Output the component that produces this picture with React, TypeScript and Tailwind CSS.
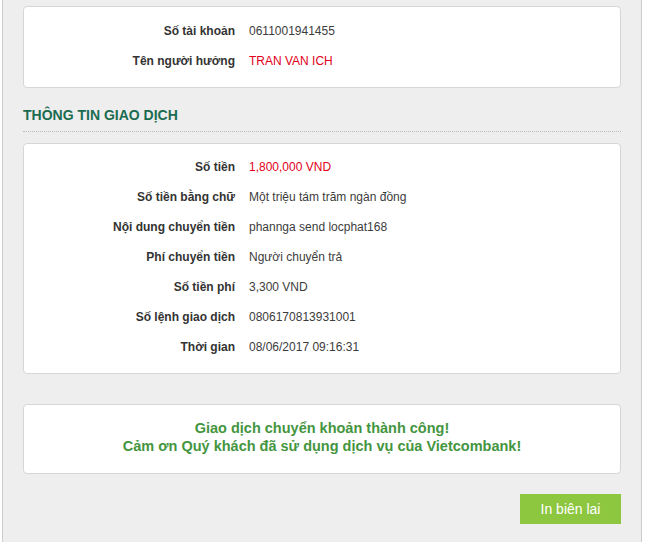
const account = [
  { label: "Số tài khoản", value: "0611001941455" },
  { label: "Tên người hưởng", value: "TRAN VAN ICH", red: true },
]

const transaction = [
  { label: "Số tiền", value: "1,800,000 VND", red: true },
  { label: "Số tiền bằng chữ", value: "Một triệu tám trăm ngàn đồng" },
  { label: "Nội dung chuyển tiền", value: "phannga send locphat168" },
  { label: "Phí chuyển tiền", value: "Người chuyển trả" },
  { label: "Số tiền phí", value: "3,300 VND" },
  { label: "Số lệnh giao dịch", value: "0806170813931001" },
  { label: "Thời gian", value: "08/06/2017 09:16:31" },
]

type Row = { label: string; value: string; red?: boolean }

function InfoRow({ row }: { row: Row }) {
  return (
    <div className="flex items-center h-[30px]">
      <div className="w-[211px] text-right font-bold text-[#333]">{row.label}</div>
      <div className={"pl-[14px] " + (row.red ? "text-[#e2001a]" : "text-[#3c3c3c]")}>{row.value}</div>
    </div>
  )
}

export default function App() {
  return (
    <div className="bg-white h-[542px] overflow-hidden font-['Liberation_Sans',Arial,sans-serif] text-[12px]">
      <div className="ml-[2px] w-[640px] h-[542px] bg-[#eeeeee] border-x border-[#cccccc] pt-[6px] px-[20px]">
        <div className="bg-white border border-[#d6d6d6] rounded-[4px] pt-[9px] pb-[11px]">
          {account.map((r) => (
            <InfoRow key={r.label} row={r} />
          ))}
        </div>

        <div className="mt-[17px] pb-[6px] border-b border-dotted border-[#bbbbbb]">
          <h2 className="h-[20px] leading-[20px] font-bold text-[14px] text-[#1b6b50]">THÔNG TIN GIAO DỊCH</h2>
        </div>

        <div className="mt-[11px] bg-white border border-[#d6d6d6] rounded-[4px] pt-[8px] pb-[11px]">
          {transaction.map((r) => (
            <InfoRow key={r.label} row={r} />
          ))}
        </div>

        <div className="mt-[30px] bg-white border border-[#d6d6d6] rounded-[4px] pt-[14px] pb-[18px] text-center font-bold text-[14.5px] leading-[18px] text-[#449540]">
          <p>Giao dịch chuyển khoản thành công!</p>
          <p>Cảm ơn Quý khách đã sử dụng dịch vụ của Vietcombank!</p>
        </div>

        <div className="flex justify-end mt-[20px]">
          <button className="w-[101px] h-[30px] bg-[#8dc63f] text-white text-[14px]">In biên lai</button>
        </div>
      </div>
    </div>
  )
}
